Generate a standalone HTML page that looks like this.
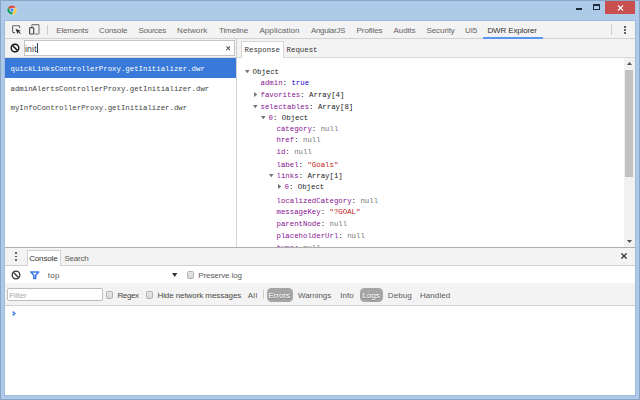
<!DOCTYPE html>
<html><head><meta charset="utf-8"><title>DWR Explorer</title>
<style>
html,body{margin:0;padding:0;}
body{width:640px;height:400px;overflow:hidden;position:relative;background:#adcae8;font-family:"Liberation Sans",sans-serif;}
div,span,svg.a{position:absolute;white-space:nowrap;box-sizing:border-box;}
i{font-style:normal}
.m{font-family:"Liberation Mono",monospace;font-size:7.36px;line-height:10px;height:10px;}
.s{font-family:"Liberation Sans",sans-serif;line-height:10px;height:10px;}
.k{color:#881391}.n{color:#787878}.st{color:#c41a16}.b{color:#1c00cf}
.cb{width:7px;height:7.3px;border:1px solid #b2b2b2;border-radius:1.5px;background:linear-gradient(#e6e6e6,#d6d6d6);}
</style></head><body>
<!-- window frame -->
<div style="left:0;top:0;width:640px;height:400px;border:1px solid #8aa5c6;"></div>
<div style="left:4px;top:20px;width:632px;height:376px;border:1px solid #9fbbdf;background:#fff"></div>
<!-- window controls -->
<div style="left:576px;top:8.2px;width:5.6px;height:1.8px;background:#1e2a38;"></div>
<div style="left:593px;top:4.3px;width:7.4px;height:5.6px;border:0.9px solid #1e2a38;border-top-width:2px;"></div>
<div style="left:605px;top:1px;width:30px;height:13px;background:#c9504f;"></div>
<svg class="a" style="left:617px;top:5px" width="7" height="6" viewBox="0 0 7 6"><path d="M1 0.5L6 5.5M6 0.5L1 5.5" stroke="#fff" stroke-width="1.1" fill="none"/></svg>
<!-- chrome icon -->
<svg class="a" style="left:7.3px;top:5px" width="10" height="10" viewBox="0 0 48 48">
<circle cx="24" cy="24" r="24" fill="#c4d8f0"/>
<path d="M24 2a22 22 0 0 1 19.05 11H24a11 11 0 0 0-10.4 7.4L5.6 12A22 22 0 0 1 24 2z" fill="#db4437"/>
<path d="M43.05 13A22 22 0 0 1 23 46l9.5-16.5A11 11 0 0 0 33 13z" fill="#ffcd40"/>
<path d="M5.6 12l9 15.5A11 11 0 0 0 28 34.3L23 46A22 22 0 0 1 5.6 12z" fill="#0f9d58"/>
<circle cx="24" cy="24" r="9.6" fill="#fff"/><circle cx="24" cy="24" r="8" fill="#4285f4"/>
</svg>
<!-- main toolbar -->
<div style="left:5px;top:21px;width:630px;height:17.6px;background:#f3f3f3;border-bottom:1px solid #d2d2d2;"></div>
<div style="left:47px;top:25px;width:1px;height:10px;background:#ccc;"></div>

<svg class="a" style="left:11px;top:24px" width="11" height="11" viewBox="0 0 11 11"><path d="M4.1 8.6H2.4Q1.6 8.6 1.6 7.8V2.6Q1.6 1.8 2.4 1.8H7.8Q8.6 1.8 8.6 2.6V4.1" fill="none" stroke="#666" stroke-width="1.1"/><path d="M4.5 4.7L9.9 6.7L8 7.6L9.9 9.5L9.3 10.1L7.4 8.2L6.5 10.1Z" fill="#333"/></svg>
<svg class="a" style="left:28px;top:24px" width="13" height="11" viewBox="0 0 13 11"><path d="M3.9 3.4V1.4Q3.9 0.6 4.7 0.6H10.2Q11 0.6 11 1.4V9.2Q11 10 10.2 10H6.2" fill="none" stroke="#7a7a7a" stroke-width="1.1"/><rect x="1.6" y="3.7" width="4.1" height="6.3" rx="0.9" fill="#f3f3f3" stroke="#4a4a4a" stroke-width="1.2"/></svg>

<span class="s" style="left:56.25px;top:25.50px;color:#646464;font-size:8px;letter-spacing:-0.174px;">Elements</span>
<span class="s" style="left:99.00px;top:25.50px;color:#646464;font-size:8px;letter-spacing:-0.150px;">Console</span>
<span class="s" style="left:138.39px;top:25.50px;color:#646464;font-size:8px;letter-spacing:-0.243px;">Sources</span>
<span class="s" style="left:177.10px;top:25.50px;color:#646464;font-size:8px;letter-spacing:0.132px;">Network</span>
<span class="s" style="left:218.93px;top:25.50px;color:#646464;font-size:8px;letter-spacing:-0.109px;">Timeline</span>
<span class="s" style="left:259.39px;top:25.50px;color:#646464;font-size:8px;letter-spacing:0.099px;">Application</span>
<span class="s" style="left:310.89px;top:25.50px;color:#646464;font-size:8px;letter-spacing:-0.304px;">AngularJS</span>
<span class="s" style="left:356.60px;top:25.50px;color:#646464;font-size:8px;letter-spacing:-0.107px;">Profiles</span>
<span class="s" style="left:393.49px;top:25.50px;color:#646464;font-size:8px;letter-spacing:-0.038px;">Audits</span>
<span class="s" style="left:426.54px;top:25.50px;color:#646464;font-size:8px;letter-spacing:-0.097px;">Security</span>
<span class="s" style="left:464.99px;top:25.50px;color:#646464;font-size:8px;letter-spacing:-0.105px;">UI5</span>
<span class="s" style="left:487.45px;top:25.50px;color:#333;font-size:8px;letter-spacing:-0.140px;">DWR Explorer</span>
<div style="left:483px;top:37px;width:60px;height:2px;background:#5a95f0;"></div>
<div style="left:611px;top:24px;width:1px;height:11px;background:#ccc;"></div>
<div style="left:623.5px;top:25.6px;width:2px;height:2px;background:#333;border-radius:1px"></div>
<div style="left:623.5px;top:28.8px;width:2px;height:2px;background:#333;border-radius:1px"></div>
<div style="left:623.5px;top:32px;width:2px;height:2px;background:#333;border-radius:1px"></div>
<div style="left:5px;top:38.6px;width:630px;height:19.4px;background:#f3f3f3;border-bottom:1px solid #d8d8d8;"></div>
<svg class="a" style="left:10px;top:43px" width="10" height="10" viewBox="0 0 10 10"><circle cx="5" cy="5" r="3.8" fill="none" stroke="#111" stroke-width="1.4"/><path d="M2.3 2.3L7.7 7.7" stroke="#111" stroke-width="1.4"/></svg>
<div style="left:24px;top:40px;width:211px;height:16px;background:#fff;border:1px solid #c4c4c4;"></div>
<div style="left:37px;top:43px;width:1px;height:10px;background:#345"></div>
<svg class="a" style="left:225.7px;top:46.2px" width="4.6" height="4.6" viewBox="0 0 4.6 4.6"><path d="M0.4 0.4L4.2 4.2M4.2 0.4L0.4 4.2" stroke="#555" stroke-width="1.1"/></svg>
<div style="left:236px;top:39px;width:0.9px;height:208px;background:#d2d2d2;"></div>
<div style="left:241px;top:40.5px;width:42.5px;height:17.5px;background:#fff;border:1px solid #d6d6d6;border-bottom:none;"></div>

<span class="s" style="left:24.93px;top:44.00px;color:#333;font-size:8.6px;letter-spacing:0.246px;">init</span>
<span class="m" style="left:244.6px;top:44.50px;color:#333;">Response</span>
<span class="m" style="left:286.6px;top:44.50px;color:#333;">Request</span>
<div style="left:5px;top:58px;width:231px;height:19.5px;background:#3879d9;"></div>
<span class="m" style="left:10.5px;top:63.75px;color:#fff;">quickLinksControllerProxy.getInitializer.dwr</span>
<span class="m" style="left:10.5px;top:83.50px;color:#444;">adminAlertsControllerProxy.getInitializer.dwr</span>
<span class="m" style="left:10.5px;top:103.20px;color:#444;">myInfoControllerProxy.getInitializer.dwr</span>
<div style="left:237px;top:58px;width:387px;height:189px;overflow:hidden">
<span class="m" style="left:15.5px;top:9.40px;color:#222;">Object</span>
<svg class="a" style="left:8.199999999999989px;top:12.200000000000003px" width="4.6" height="3.3" viewBox="0 0 4.6 3.3"><path d="M0 0H4.6L2.3 3.3Z" fill="#747474"/></svg>
<span class="m" style="left:23.5px;top:20.00px;color:#222;"><i class="k">admin</i>: <i class="b">true</i></span>
<span class="m" style="left:23.5px;top:31.90px;color:#222;"><i class="k">favorites</i>: Array[4]</span>
<svg class="a" style="left:16.599999999999994px;top:34.3px" width="3.4" height="5" viewBox="0 0 3.4 5"><path d="M0 0L3.4 2.5L0 5Z" fill="#747474"/></svg>
<span class="m" style="left:23.5px;top:43.90px;color:#222;"><i class="k">selectables</i>: Array[8]</span>
<svg class="a" style="left:16.099999999999994px;top:46.8px" width="4.6" height="3.3" viewBox="0 0 4.6 3.3"><path d="M0 0H4.6L2.3 3.3Z" fill="#747474"/></svg>
<span class="m" style="left:31.5px;top:54.75px;color:#222;"><i class="k">0</i>: Object</span>
<svg class="a" style="left:24.100000000000023px;top:57.599999999999994px" width="4.6" height="3.3" viewBox="0 0 4.6 3.3"><path d="M0 0H4.6L2.3 3.3Z" fill="#747474"/></svg>
<span class="m" style="left:39.5px;top:65.60px;color:#222;"><i class="k">category</i>: <i class="n">null</i></span>
<span class="m" style="left:39.5px;top:77.25px;color:#222;"><i class="k">href</i>: <i class="n">null</i></span>
<span class="m" style="left:39.5px;top:89.40px;color:#222;"><i class="k">id</i>: <i class="n">null</i></span>
<span class="m" style="left:39.5px;top:101.60px;color:#222;"><i class="k">label</i>: <i class="st">"Goals"</i></span>
<span class="m" style="left:39.5px;top:113.10px;color:#222;"><i class="k">links</i>: Array[1]</span>
<svg class="a" style="left:32.30000000000001px;top:116.30000000000001px" width="4.6" height="3.3" viewBox="0 0 4.6 3.3"><path d="M0 0H4.6L2.3 3.3Z" fill="#747474"/></svg>
<span class="m" style="left:47.5px;top:123.90px;color:#222;"><i class="k">0</i>: Object</span>
<svg class="a" style="left:40.60000000000002px;top:126.30000000000001px" width="3.4" height="5" viewBox="0 0 3.4 5"><path d="M0 0L3.4 2.5L0 5Z" fill="#747474"/></svg>
<span class="m" style="left:39.5px;top:137.50px;color:#222;"><i class="k">localizedCategory</i>: <i class="n">null</i></span>
<span class="m" style="left:39.5px;top:149.40px;color:#222;"><i class="k">messageKey</i>: <i class="st">"?GOAL"</i></span>
<span class="m" style="left:39.5px;top:161.25px;color:#222;"><i class="k">parentNode</i>: <i class="n">null</i></span>
<span class="m" style="left:39.5px;top:173.10px;color:#222;"><i class="k">placeholderUrl</i>: <i class="n">null</i></span>
<span class="m" style="left:39.5px;top:185.00px;color:#222;"><i class="k">type</i>: <i class="n">null</i></span>
</div>
<div style="left:624px;top:58px;width:11px;height:189px;background:#f1f1f1;"></div>
<div style="left:625px;top:69.5px;width:7.8px;height:107px;background:#c1c1c1;"></div>
<svg class="a" style="left:626.5px;top:62px" width="5" height="3" viewBox="0 0 5 3"><path d="M0 3L2.5 0L5 3Z" fill="#505050"/></svg>
<svg class="a" style="left:626.5px;top:240px" width="5" height="3" viewBox="0 0 5 3"><path d="M0 0L2.5 3L5 0Z" fill="#505050"/></svg>

<div style="left:5px;top:247px;width:630px;height:0.8px;background:#adadad;"></div>
<div style="left:5px;top:247.8px;width:630px;height:18px;background:#f3f3f3;border-bottom:1px solid #d0d0d0;"></div>
<div style="left:26.5px;top:249.5px;width:34.5px;height:16.5px;background:#fff;border:1px solid #d0d0d0;border-bottom:none;"></div>

<div style="left:15.3px;top:252px;width:1.8px;height:1.8px;background:#333;border-radius:1px"></div>
<div style="left:15.3px;top:255.7px;width:1.8px;height:1.8px;background:#333;border-radius:1px"></div>
<div style="left:15.3px;top:259.4px;width:1.8px;height:1.8px;background:#333;border-radius:1px"></div>
<svg class="a" style="left:621px;top:253.4px" width="6" height="6" viewBox="0 0 6 6"><path d="M0.4 0.4L5.6 5.6M5.6 0.4L0.4 5.6" stroke="#333" stroke-width="1.3"/></svg>
<span class="s" style="left:29.20px;top:253.50px;color:#333;font-size:8px;letter-spacing:-0.158px;">Console</span>
<span class="s" style="left:64.39px;top:253.50px;color:#5a5a5a;font-size:8px;letter-spacing:-0.224px;">Search</span>
<svg class="a" style="left:11.4px;top:270px" width="10" height="10" viewBox="0 0 10 10"><circle cx="5" cy="5" r="3.8" fill="none" stroke="#333" stroke-width="1.3"/><path d="M2.3 2.3L7.7 7.7" stroke="#333" stroke-width="1.3"/></svg>
<svg class="a" style="left:30px;top:271px" width="9.5" height="8.5" viewBox="0 0 9.5 8.5"><path d="M0.9 0.9H8.6L5.7 4.2V7.4H3.8V4.2Z" fill="none" stroke="#3b78e7" stroke-width="1.5" stroke-linejoin="round"/></svg>
<svg class="a" style="left:172.2px;top:273px" width="5.4" height="4" viewBox="0 0 5.4 4"><path d="M0 0H5.4L2.7 4Z" fill="#333"/></svg>
<div class="cb" style="left:186.7px;top:271.3px"></div>

<span class="s" style="left:47.63px;top:270.50px;color:#5a5a5a;font-size:8px;letter-spacing:0.290px;">top</span>
<span class="s" style="left:198.35px;top:270.50px;color:#5a5a5a;font-size:8px;letter-spacing:-0.114px;">Preserve log</span>
<div style="left:5px;top:283px;width:630px;height:23px;background:#f3f3f3;border-bottom:0.8px solid #cfcfcf;"></div>
<div style="left:7.3px;top:288px;width:95.5px;height:13.3px;background:#fff;border:1px solid #bdbdbd;border-radius:2px"></div>
<div class="cb" style="left:106.3px;top:291.3px"></div>
<div class="cb" style="left:146.3px;top:291.3px"></div>
<div style="left:263.2px;top:289.5px;width:1px;height:9.5px;background:#ccc;"></div>
<div style="left:266.6px;top:288px;width:26.7px;height:14.4px;background:#a5a5a5;border-radius:4.5px"></div>
<div style="left:360.3px;top:288px;width:22.7px;height:14.4px;background:#a5a5a5;border-radius:4.5px"></div>

<span class="s" style="left:9.15px;top:290.50px;color:#a9a9a9;font-size:8px;letter-spacing:-0.040px;">Filter</span>
<span class="s" style="left:117.45px;top:290.50px;color:#484848;font-size:8px;letter-spacing:-0.375px;">Regex</span>
<span class="s" style="left:157.45px;top:290.50px;color:#484848;font-size:8px;letter-spacing:-0.077px;">Hide network messages</span>
<span class="s" style="left:247.69px;top:290.50px;color:#5a5a5a;font-size:8px;letter-spacing:0.325px;">All</span>
<span class="s" style="left:268.25px;top:290.50px;color:#fff;font-size:8px;letter-spacing:0.010px;text-shadow:0 0.7px 0.3px rgba(0,0,0,0.3)">Errors</span>
<span class="s" style="left:297.97px;top:290.50px;color:#5a5a5a;font-size:8px;letter-spacing:-0.026px;">Warnings</span>
<span class="s" style="left:340.17px;top:290.50px;color:#5a5a5a;font-size:8px;letter-spacing:0.073px;">Info</span>
<span class="s" style="left:362.55px;top:290.50px;color:#fff;font-size:8px;letter-spacing:-0.040px;text-shadow:0 0.7px 0.3px rgba(0,0,0,0.3)">Logs</span>
<span class="s" style="left:387.85px;top:290.50px;color:#5a5a5a;font-size:8px;letter-spacing:0.095px;">Debug</span>
<span class="s" style="left:419.95px;top:290.50px;color:#5a5a5a;font-size:8px;letter-spacing:0.085px;">Handled</span>
<svg class="a" style="left:11.8px;top:311.4px" width="4" height="5" viewBox="0 0 4 5"><path d="M0.7 0.6L2.9 2.5L0.7 4.4" fill="none" stroke="#3b78e7" stroke-width="1.4"/></svg>
</body></html>
